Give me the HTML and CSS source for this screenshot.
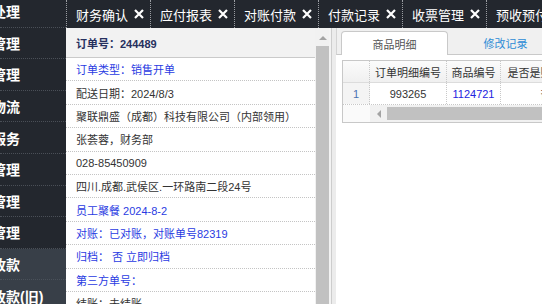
FILE: index.html
```html
<!DOCTYPE html>
<html lang="zh-CN">
<head>
<meta charset="utf-8">
<title>财务确认</title>
<link rel="stylesheet" href="styles.css">
</head>
<body>
<div class="app">
  <aside class="sidebar">
    <div class="nav">
      <div class="nav-item"><span>处理</span></div>
      <div class="nav-item"><span>管理</span></div>
      <div class="nav-item"><span>管理</span></div>
      <div class="nav-item"><span>物流</span></div>
      <div class="nav-item"><span>服务</span></div>
      <div class="nav-item"><span>管理</span></div>
      <div class="nav-item"><span>管理</span></div>
      <div class="nav-item"><span>管理</span></div>
      <div class="nav-item sub"><span>收款</span></div>
      <div class="nav-item sub"><span>收款(旧)</span></div>
    </div>
  </aside>
  <div class="main">
    <div class="topbar">
      <div class="tab"><span>财务确认</span><svg class="x" viewBox="0 0 10 10" width="10" height="10"><path d="M1 1L9 9M9 1L1 9"/></svg></div>
      <div class="tab"><span>应付报表</span><svg class="x" viewBox="0 0 10 10" width="10" height="10"><path d="M1 1L9 9M9 1L1 9"/></svg></div>
      <div class="tab"><span>对账付款</span><svg class="x" viewBox="0 0 10 10" width="10" height="10"><path d="M1 1L9 9M9 1L1 9"/></svg></div>
      <div class="tab"><span>付款记录</span><svg class="x" viewBox="0 0 10 10" width="10" height="10"><path d="M1 1L9 9M9 1L1 9"/></svg></div>
      <div class="tab"><span>收票管理</span><svg class="x" viewBox="0 0 10 10" width="10" height="10"><path d="M1 1L9 9M9 1L1 9"/></svg></div>
      <div class="tab"><span>预收预付款</span><svg class="x" viewBox="0 0 10 10" width="10" height="10"><path d="M1 1L9 9M9 1L1 9"/></svg></div>
    </div>
    <div class="content">
      <section class="left">
        <div class="info">
          <div class="info-head">订单号：244489</div>
          <div class="row blue">订单类型：销售开单</div>
          <div class="row">配送日期：2024/8/3</div>
          <div class="row">聚联鼎盛（成都）科技有限公司（内部领用）</div>
          <div class="row">张荟蓉，财务部</div>
          <div class="row">028-85450909</div>
          <div class="row">四川.成都.武侯区.一环路南二段24号</div>
          <div class="row blue">员工聚餐 2024-8-2</div>
          <div class="row blue">对账：已对账，对账单号82319</div>
          <div class="row blue">归档：&nbsp;否 立即归档</div>
          <div class="row blue">第三方单号：</div>
          <div class="row">结账：未结账</div>
        </div>
        <div class="vscroll">
          <div class="up"></div>
          <div class="vthumb"></div>
        </div>
      </section>
      <div class="splitter"></div>
      <section class="right">
        <div class="ptabs">
          <div class="ptab active">商品明细</div>
          <div class="ptab link">修改记录</div>
        </div>
        <div class="pbody">
          <div class="grid">
            <div class="grow ghead">
              <div class="cell rn"></div>
              <div class="cell c1">订单明细编号</div>
              <div class="cell c2">商品编号</div>
              <div class="cell c3">是否是赠送商品</div>
            </div>
            <div class="grow gdata">
              <div class="cell rn num">1</div>
              <div class="cell c1">993265</div>
              <div class="cell c2 link-blue">1124721</div>
              <div class="cell c3">否</div>
            </div>
            <div class="grow gscroll">
              <div class="cell rn"></div>
              <div class="htrack">
                <div class="hbtn"><div class="left-arrow"></div></div>
                <div class="hthumb"></div>
              </div>
            </div>
          </div>
        </div>
      </section>
    </div>
  </div>
</div>
</body>
</html>
```
FILE: styles.css
```css
* { box-sizing: border-box; margin: 0; padding: 0; }
html, body { width: 542px; height: 304px; overflow: hidden; }
body {
  font-family: "Liberation Sans", "Noto Sans CJK SC", sans-serif;
  font-size: 11px;
  color: #333;
  background: #fff;
}
.app { display: flex; height: 304px; }

/* sidebar */
.sidebar { width: 66px; flex: none; background: #23272e; overflow: hidden; }
.nav { margin-top: -4px; }
.nav-item {
  height: 31.6px;
  display: flex;
  align-items: center;
  border-bottom: 1px dotted #4a4f57;
  color: #fff;
  font-family: "Noto Sans CJK SC", sans-serif;
  font-weight: bold;
  font-size: 14px;
  white-space: nowrap;
}
.nav-item span { margin-left: -8px; }
.nav-item.sub { background: #383f48; border-bottom-color: #4a515a; }
.nav-item.sub span { font-family: "Liberation Sans", "Noto Sans CJK SC", sans-serif; }

/* main */
.main { flex: 1; display: flex; flex-direction: column; min-width: 0; }
.topbar {
  height: 28px;
  flex: none;
  background: #23272e;
  display: flex;
  overflow: hidden;
  border-left: 1px dotted #9a9da2;
}
.tab {
  flex: none;
  width: 84px;
  border-right: 1px dotted #9a9da2;
  display: flex;
  align-items: center;
  padding-left: 9px;
  gap: 6px;
  color: #fff;
  font-size: 13px;
  white-space: nowrap;
}
.tab .x { flex: none; }
.tab .x path { stroke: #fff; stroke-width: 2.2; fill: none; }

.content { flex: 1; display: flex; min-height: 0; }

/* left info panel */
.left { width: 263px; flex: none; display: flex; }
.info { flex: 1; min-width: 0; overflow: hidden; }
.info-head {
  height: 30px;
  background: #f2f2f2;
  border-bottom: 1px solid #cacaca;
  padding-left: 10px;
  display: flex;
  align-items: center;
  font-weight: bold;
  color: #26305e;
}
.row {
  height: 23.4px;
  border-bottom: 1px dotted #c4c4c4;
  padding-left: 10px;
  display: flex;
  align-items: center;
  white-space: nowrap;
}
.blue { color: #2a3be2; }

.vscroll {
  width: 14px;
  flex: none;
  background: #f1f1f1;
  display: flex;
  flex-direction: column;
}
.vscroll .up {
  width: 0; height: 0;
  border-left: 4px solid transparent;
  border-right: 4px solid transparent;
  border-bottom: 4px solid #a3a3a3;
  margin: 8px auto 0 4px;
}
.vthumb { margin: 6px 0 0 1px; width: 13px; flex: 1; background: #c1c1c1; }

.splitter {
  width: 7px;
  flex: none;
  background: linear-gradient(to right, #f3f3f3 0 2px, #cdcdcd 2px 3px, #ececec 3px);
}

/* right panel */
.right { flex: 1; min-width: 0; display: flex; flex-direction: column; background: #fff; overflow: hidden; }
.ptabs {
  height: 27px;
  flex: none;
  background: #f0f0f0;
  border-left: 1px solid #d4d4d4;
  border-bottom: 1px solid #c9c9c9;
  display: flex;
  align-items: flex-end;
  padding-left: 4px;
}
.ptab {
  width: 107px;
  height: 24px;
  flex: none;
  display: flex;
  align-items: center;
  justify-content: center;
  margin-bottom: -1px;
  font-size: 11px;
}
.ptab.active {
  background: #fff;
  border: 1px solid #c9c9c9;
  border-bottom: none;
  border-radius: 4px 4px 0 0;
  color: #555;
}
.ptab.link { color: #2d8cd6; margin-left: 4px; }

.pbody { padding: 5px 0 0 6px; }
.grid { width: 300px; border: 1px solid #c8c8c8; border-right: none; }
.grow { display: flex; height: 22px; }
.ghead { height: 22px; border-bottom: 1px solid #dcdcdc; background: linear-gradient(#fbfbfb, #f0f0f0); }
.gdata { height: 22px; border-bottom: 1px dotted #c8c8c8; }
.gscroll { height: 17px; }
.cell {
  flex: none;
  display: flex;
  align-items: center;
  justify-content: center;
  border-right: 1px dotted #c8c8c8;
  white-space: nowrap;
  overflow: hidden;
}
.rn { width: 27px; }
.c1 { width: 77px; }
.c2 { width: 54px; }
.c3 { width: 91px; }
.gdata .rn { background: #f4f4f4; }
.num { color: #4a72b0; }
.link-blue { color: #2323e0; }
.gscroll .rn { background: #fafafa; border-right: none; }
.htrack { flex: 1; display: flex; background: #f1f1f1; }
.hbtn { width: 17px; flex: none; display: flex; align-items: center; justify-content: center; }
.left-arrow {
  width: 0; height: 0;
  border-top: 4px solid transparent;
  border-bottom: 4px solid transparent;
  border-right: 4px solid #a3a3a3;
}
.hthumb { flex: 1; margin: 2px 0 2px 0; background: #c1c1c1; }
```
